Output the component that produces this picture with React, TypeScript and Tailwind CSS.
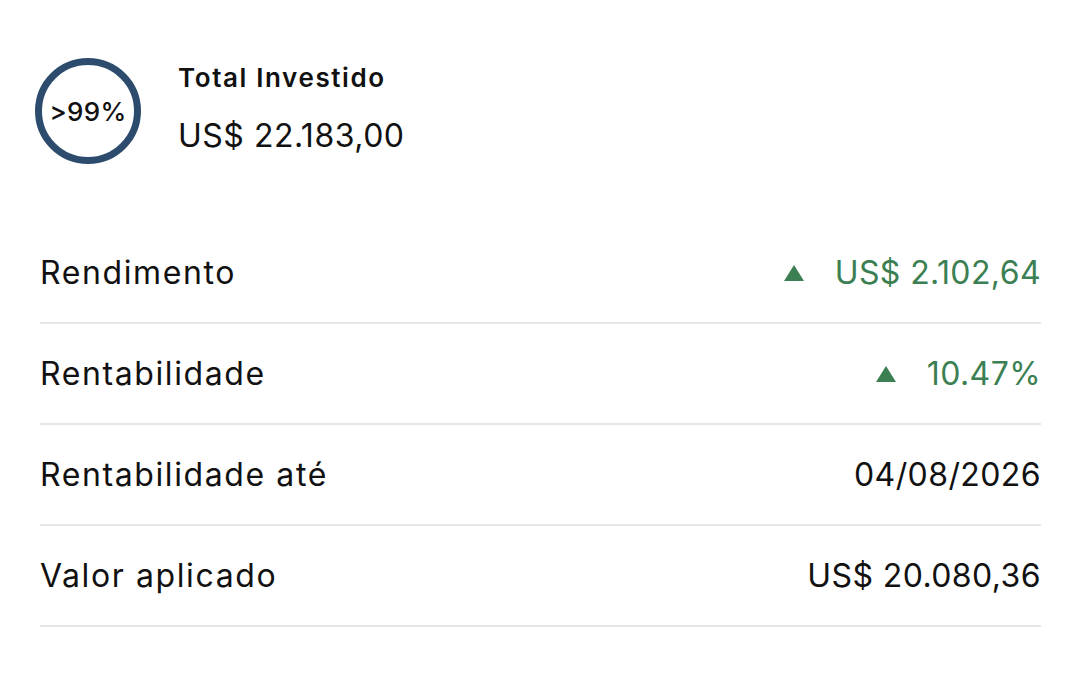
import { ReactNode } from 'react';

interface Row {
  label: string;
  value: string;
  up?: boolean;
}

const rows: Row[] = [
  { label: 'Rendimento', value: 'US$ 2.102,64', up: true },
  { label: 'Rentabilidade', value: '10.47%', up: true },
  { label: 'Rentabilidade até', value: '04/08/2026' },
  { label: 'Valor aplicado', value: 'US$ 20.080,36' },
];

function UpArrow() {
  return (
    <svg width="20" height="16" viewBox="0 0 20 16" className="mr-[31px]">
      <polygon points="10,0 20,16 0,16" fill="#3b7f52" />
    </svg>
  );
}

function Value({ row }: { row: Row }): ReactNode {
  if (row.up) {
    return (
      <div className="flex items-center text-[#3b7f52]">
        <UpArrow />
        <span>{row.value}</span>
      </div>
    );
  }
  return <span className="text-[#111]">{row.value}</span>;
}

export default function App() {
  return (
    <div
      className="w-[1080px] h-[690px] bg-white pl-10 pr-[39px] pt-[58px]"
      style={{ fontFamily: 'Inter, "Liberation Sans", sans-serif' }}
    >
      <div className="flex items-start ml-[-5px]">
        <div className="w-[106px] h-[106px] rounded-full border-[7px] border-[#2c4b6d] flex items-center justify-center shrink-0">
          <span className="text-[26px] font-medium text-[#111] tracking-[0.3px]">&gt;99%</span>
        </div>
        <div className="ml-[37px] pt-[3px]">
          <div className="text-[26px] font-semibold text-[#111] leading-[34px] tracking-[1.6px]">Total Investido</div>
          <div className="text-[32px] text-[#111] leading-[40px] mt-[21px] tracking-[0.5px]">US$ 22.183,00</div>
        </div>
      </div>

      <div className="mt-[59px]">
        {rows.map((row) => (
          <div
            key={row.label}
            className="h-[101px] flex items-center justify-between border-b-2 border-[#e6e6e6] text-[32px]"
          >
            <span className="text-[#111] tracking-[1.6px]">{row.label}</span>
            <span className="tracking-[0.4px]">
              <Value row={row} />
            </span>
          </div>
        ))}
      </div>
    </div>
  );
}
